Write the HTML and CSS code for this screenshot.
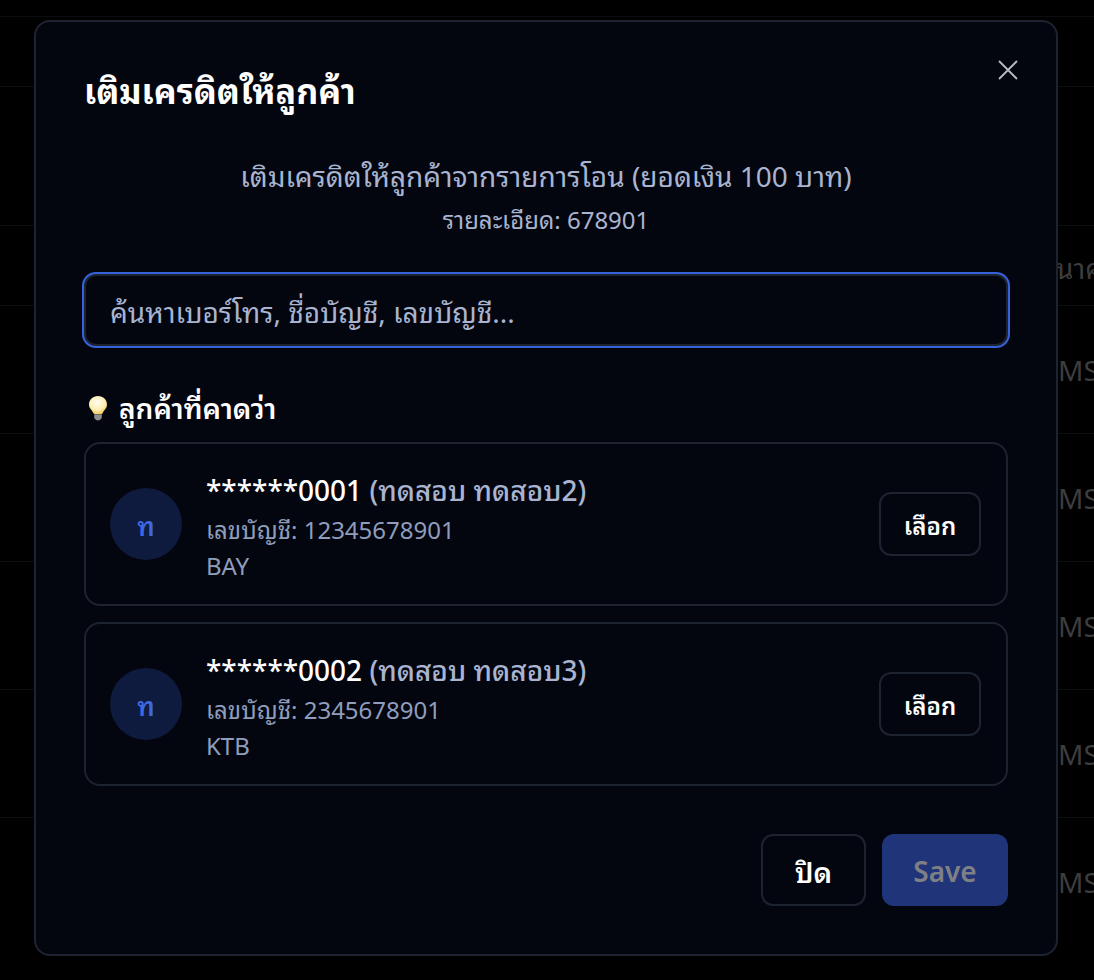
FILE: index.html
```html
<!DOCTYPE html>
<html lang="th">
<head>
<meta charset="utf-8">
<title>เติมเครดิตให้ลูกค้า</title>
<link rel="stylesheet" href="styles.css">
</head>
<body>
<div class="table">
  <div class="row row-a"></div>
  <div class="row row-b"></div>
  <div class="row row-c"><span class="cell cell-head">นาค</span></div>
  <div class="row row-e"><span class="cell">MSG</span></div>
  <div class="row row-e"><span class="cell">MSG</span></div>
  <div class="row row-e"><span class="cell">MSG</span></div>
  <div class="row row-e"><span class="cell">MSG</span></div>
  <div class="row row-e"><span class="cell">MSG</span></div>
</div>
<div class="modal">
  <button class="close" aria-label="close">
    <svg class="close-icon" viewBox="0 0 20 20"><path d="M1 1 L19 19 M19 1 L1 19"/></svg>
  </button>
  <h1 class="title">เติมเครดิตให้ลูกค้า</h1>
  <div class="intro">
    <p class="intro-main">เติมเครดิตให้ลูกค้าจากรายการโอน (ยอดเงิน 100 บาท)</p>
    <p class="intro-sub">รายละเอียด: 678901</p>
  </div>
  <input class="search" type="text" placeholder="ค้นหาเบอร์โทร, ชื่อบัญชี, เลขบัญชี...">
  <h2 class="hint">
    <svg class="bulb" viewBox="0 0 20 26">
      <defs><radialGradient id="glow" cx="0.45" cy="0.35" r="0.7"><stop offset="0" stop-color="#fffdf0"/><stop offset="0.6" stop-color="#fdeeb4"/><stop offset="1" stop-color="#f2c14e"/></radialGradient></defs>
      <path d="M10 1 C4.8 1 1 4.8 1 9.4 C1 13 3.6 14.6 5 17.5 L6 19 H14 L15 17.5 C16.4 14.6 19 13 19 9.4 C19 4.8 15.2 1 10 1 Z" fill="url(#glow)"/>
      <path d="M6.2 19.2 H13.8 V23 Q12 25.5 10 25.5 Q8 25.5 6.2 23 Z" fill="#8d8d8d"/>
    </svg>
    <span>ลูกค้าที่คาดว่า</span>
  </h2>
  <div class="cards">
    <div class="card">
      <div class="avatar">ท</div>
      <div class="info">
        <div class="phone">******0001 <span class="name">(ทดสอบ ทดสอบ2)</span></div>
        <div class="meta">เลขบัญชี: 12345678901</div>
        <div class="meta">BAY</div>
      </div>
      <button class="pick">เลือก</button>
    </div>
    <div class="card">
      <div class="avatar">ท</div>
      <div class="info">
        <div class="phone">******0002 <span class="name">(ทดสอบ ทดสอบ3)</span></div>
        <div class="meta">เลขบัญชี: 2345678901</div>
        <div class="meta">KTB</div>
      </div>
      <button class="pick">เลือก</button>
    </div>
  </div>
  <div class="actions">
    <button class="btn btn-close">ปิด</button>
    <button class="btn btn-save">Save</button>
  </div>
</div>
</body>
</html>
```
FILE: styles.css
```css
* { box-sizing: border-box; }
html, body { margin: 0; height: 100%; }
body {
  background: #000;
  overflow: hidden;
  position: relative;
  font-family: "Noto Sans", "Noto Sans Thai Looped", sans-serif;
  color: #fff;
}
.table { padding-top: 16px; }
.row {
  border-top: 1px solid #0c0d10;
  display: flex;
  align-items: center;
  justify-content: flex-end;
  overflow: hidden;
  white-space: nowrap;
}
.row-a { height: 70px; }
.row-b { height: 139px; }
.row-c { height: 80px; }
.row-e { height: 128px; }
.cell {
  width: 1094px;
  padding-left: 1058px;
  flex: none;
  font-size: 28px;
  color: #3d3d3d;
}
.cell-head { padding-left: 1056px; padding-top: 2px; }
.modal {
  position: absolute;
  left: 34px;
  top: 20px;
  width: 1024px;
  height: 936px;
  background: #03060f;
  border: 2px solid #1e2331;
  border-radius: 16px;
  padding: 45px 48px;
  display: flex;
  flex-direction: column;
}
.close {
  position: absolute;
  right: 38px;
  top: 38px;
  width: 20px;
  height: 20px;
  padding: 0;
  border: 0;
  background: none;
  display: flex;
}
.close-icon { width: 20px; height: 20px; fill: none; stroke: #b9bcc4; stroke-width: 1.8; }
.title {
  margin: 0;
  font-size: 34px;
  line-height: 48px;
  font-weight: 700;
}
.intro { margin-top: 37px; text-align: center; color: #a9b4d0; }
.intro-main { margin: 0; font-size: 28px; line-height: 48px; }
.intro-sub { margin: 0; font-size: 24px; line-height: 40px; }
.search {
  margin-top: 34px;
  height: 72px;
  width: 100%;
  flex: none;
  background: #03060f;
  border: 2px solid #1e2331;
  box-shadow: 0 0 0 2px #3563dc;
  border-radius: 12px;
  padding: 4px 24px 0;
  font-family: inherit;
  font-size: 28px;
  color: #fff;
  outline: none;
}
.search::placeholder { color: #a9b4d0; opacity: 1; }
.hint {
  margin: 42px 0 0;
  display: flex;
  align-items: center;
  gap: 11px;
  font-size: 28px;
  line-height: 40px;
  font-weight: 600;
  padding-left: 4px;
}
.bulb { width: 20px; height: 26px; }
.cards { margin-top: 14px; display: flex; flex-direction: column; gap: 16px; }
.card {
  height: 164px;
  border: 2px solid #1e2331;
  border-radius: 16px;
  padding: 0 25px 0 24px;
  display: flex;
  align-items: center;
  gap: 24px;
}
.avatar {
  width: 72px;
  height: 72px;
  border-radius: 50%;
  flex: none;
  background: #0e1b3e;
  color: #3d68e0;
  display: flex;
  align-items: center;
  justify-content: center;
  font-size: 26px;
  font-weight: 600;
}
.info { flex: 1; padding-top: 4px; }
.phone { font-size: 28px; line-height: 44px; font-weight: 500; }
.name { color: #a9b4d0; }
.meta { font-size: 24px; line-height: 36px; color: #8f9dbd; }
.pick {
  width: 102px;
  height: 64px;
  background: none;
  border: 2px solid #1e2331;
  border-radius: 12px;
  color: #fff;
  font-family: inherit;
  font-size: 24px;
  font-weight: 600;
}
.actions { margin-top: 48px; display: flex; justify-content: flex-end; gap: 16px; }
.btn {
  height: 72px;
  border-radius: 12px;
  font-family: inherit;
  font-size: 28px;
  font-weight: 600;
}
.btn-close { width: 105px; background: none; border: 2px solid #1e2331; color: #fff; }
.btn-save { width: 126px; background: #1f3479; border: 0; color: #7f8086; padding-top: 3px; }
```
